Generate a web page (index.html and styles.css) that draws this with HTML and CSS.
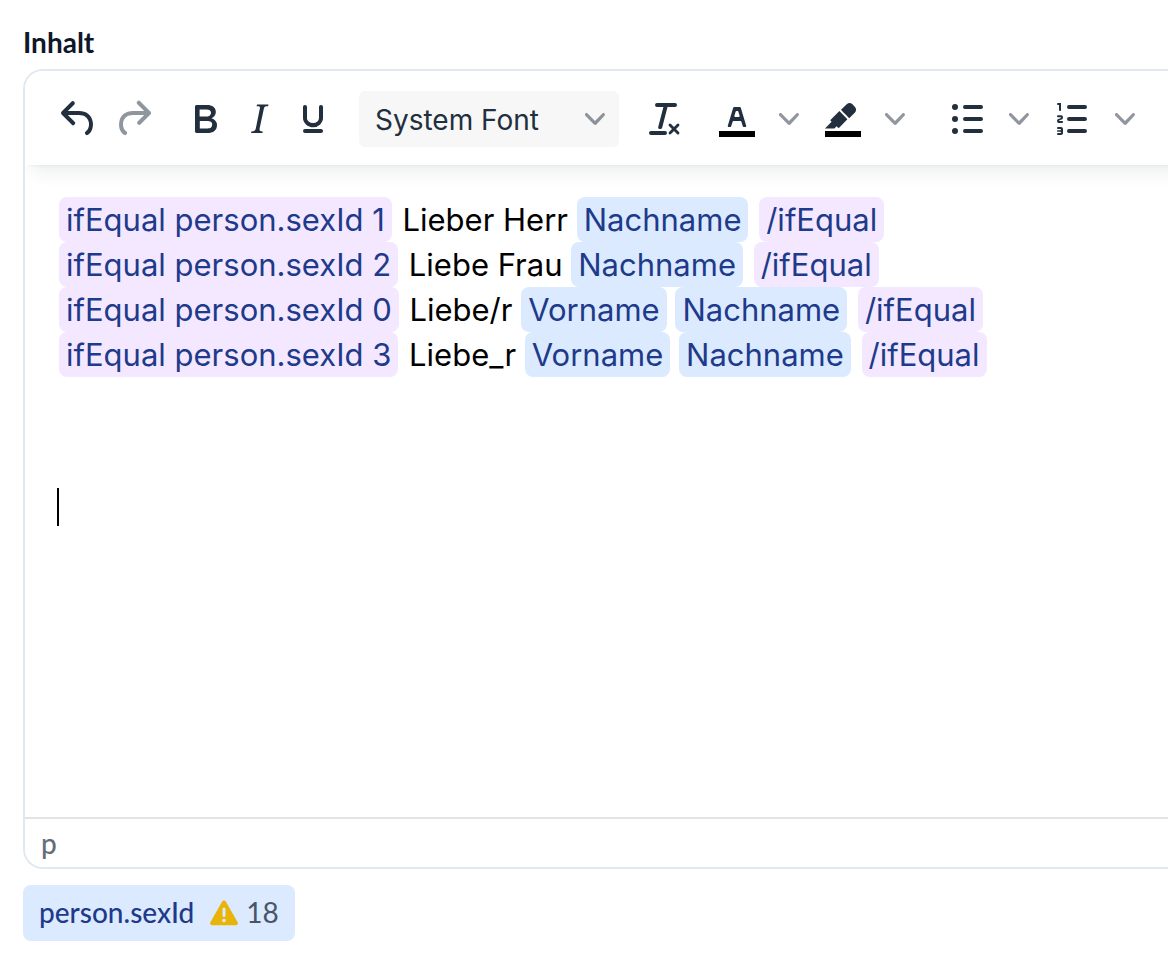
FILE: index.html
```
<!DOCTYPE html>
<html lang="de">
<head>
<meta charset="utf-8">
<title>Inhalt</title>
<link rel="stylesheet" href="styles.css">
</head>
<body>
<main class="field">
  <h1 class="field-label" id="content-label">Inhalt</h1>
  <section class="editor" aria-labelledby="content-label">
    <div class="toolbar" role="toolbar" aria-label="Formatierung">
      <div class="group history-group">
        <button class="tool" aria-label="Rückgängig"><svg class="icon" viewBox="0 0 24 24"><path d="M6.4 8H12c3.7 0 6.2 2 6.8 5.1.6 2.7-.4 5.6-2.3 6.8a1 1 0 0 1-1-1.8c1.1-.6 1.8-2.7 1.4-4.6-.5-2.1-2.1-3.5-4.9-3.5H6.4l3.3 3.3a1 1 0 1 1-1.4 1.4l-5-5a1 1 0 0 1 0-1.4l5-5a1 1 0 0 1 1.4 1.4L6.4 8Z"/></svg></button>
        <button class="tool" aria-label="Wiederholen" disabled><svg class="icon" viewBox="0 0 24 24"><path d="M17.6 10H12c-2.8 0-4.4 1.4-4.9 3.5-.4 2 .3 4 1.4 4.6a1 1 0 1 1-1 1.8c-2-1.2-2.9-4.1-2.3-6.8.6-3 3-5.1 6.8-5.1h5.6l-3.3-3.3a1 1 0 1 1 1.4-1.4l5 5a1 1 0 0 1 0 1.4l-5 5a1 1 0 0 1-1.4-1.4l3.3-3.3Z"/></svg></button>
      </div>
      <div class="group">
        <button class="tool" aria-label="Fett"><svg class="icon" viewBox="0 0 24 24"><path fill-rule="evenodd" d="M7.8 19c-.3 0-.5 0-.6-.2l-.2-.5V5.7c0-.2 0-.4.2-.5l.6-.2h5c1.5 0 2.7.3 3.5 1 .7.6 1.1 1.4 1.1 2.5a3 3 0 0 1-.6 1.9c-.4.6-1 1-1.6 1.2.4.1.9.3 1.3.6s.8.7 1 1.2c.4.4.5 1 .5 1.6 0 1.3-.4 2.3-1.3 3-.8.7-2.1 1-3.8 1H7.8Zm5-8.3c.6 0 1.2-.1 1.6-.5.4-.3.6-.7.6-1.3 0-1.1-.8-1.7-2.3-1.7H9.3v3.5h3.4Zm.5 6c.7 0 1.3-.1 1.7-.4.4-.4.6-.9.6-1.5s-.2-1-.7-1.4c-.4-.3-1-.4-2-.4H9.4v3.8h4Z"/></svg></button>
        <button class="tool" aria-label="Kursiv"><svg class="icon" viewBox="0 0 24 24"><path d="m16.7 4.7-.1.9h-.3c-.6 0-1 0-1.4.3-.3.3-.4.6-.5 1.1l-2.1 9.8v.6c0 .5.4.8 1.4.8h.2l-.2.8H8l.2-.8h.2c1.1 0 1.8-.5 2-1.5l2-9.8.1-.5c0-.6-.4-.8-1.4-.8h-.3l.2-.9h5.8Z"/></svg></button>
        <button class="tool" aria-label="Unterstrichen"><svg class="icon" viewBox="0 0 24 24"><path d="M16 5c.6 0 1 .4 1 1v5.5a4 4 0 0 1-.4 1.8l-1 1.4a5.3 5.3 0 0 1-5.5 1 5 5 0 0 1-1.6-1c-.5-.4-.8-.9-1.1-1.4a4 4 0 0 1-.4-1.8V6c0-.6.4-1 1-1s1 .4 1 1v5.5c0 .3 0 .6.2 1l.6.7a3.3 3.3 0 0 0 2.2.8 3.4 3.4 0 0 0 2.2-.8c.3-.2.4-.5.6-.8l.2-.9V6c0-.6.4-1 1-1ZM8 17h8c.6 0 1 .4 1 1s-.4 1-1 1H8a1 1 0 0 1 0-2Z"/></svg></button>
      </div>
      <div class="select-wrap">
        <select class="font-select" aria-label="Schriftart"><option>System Font</option></select>
        <svg class="chevron" viewBox="0 0 10 10"><path d="M8.7 2.2c.3-.3.8-.3 1 0 .4.4.4.9 0 1.2L5.7 7.8c-.3.3-.9.3-1.2 0L.2 3.4a.8.8 0 0 1 0-1.2c.3-.3.8-.3 1.1 0L5 6l3.7-3.8Z"/></svg>
      </div>
      <div class="group">
        <button class="tool" aria-label="Formatierung entfernen"><svg class="icon" viewBox="0 0 24 24"><path d="M13.2 6a1 1 0 0 1 0 .2l-2.6 10a1 1 0 0 1-1 .8h-.2a.8.8 0 0 1-.8-1l2.6-10H8a1 1 0 1 1 0-2h9a1 1 0 0 1 0 2h-3.8ZM5 18h7a1 1 0 0 1 0 2H5a1 1 0 0 1 0-2Zm13 1.5L16.5 18 15 19.5a.7.7 0 0 1-1-1l1.5-1.5-1.5-1.5a.7.7 0 0 1 1-1l1.5 1.5 1.5-1.5a.7.7 0 0 1 1 1L17.5 17l1.5 1.5a.7.7 0 0 1-1 1Z"/></svg></button>
      </div>
      <div class="group split-group color-group">
        <div class="split">
          <button class="tool" aria-label="Textfarbe"><svg class="icon" viewBox="0 0 24 24"><path class="swatch" d="M3 18h18v3H3z"/><path fill-rule="evenodd" d="M8.7 16h-.8a.5.5 0 0 1-.5-.6l2.7-9c.1-.3.3-.4.5-.4h2.8c.2 0 .4.1.5.4l2.7 9a.5.5 0 0 1-.5.6h-.8a.5.5 0 0 1-.4-.4l-.7-2.2c0-.3-.3-.4-.5-.4h-3.4c-.2 0-.4.1-.5.4l-.7 2.2c0 .3-.2.4-.4.4Zm2.6-7.6-.6 2a.5.5 0 0 0 .5.6h1.6a.5.5 0 0 0 .5-.6l-.6-2c0-.3-.3-.4-.5-.4h-.4c-.2 0-.4.1-.5.4Z"/></svg></button>
          <button class="tool" aria-label="Textfarbe wählen"><svg class="chevron" viewBox="0 0 10 10"><path d="M8.7 2.2c.3-.3.8-.3 1 0 .4.4.4.9 0 1.2L5.7 7.8c-.3.3-.9.3-1.2 0L.2 3.4a.8.8 0 0 1 0-1.2c.3-.3.8-.3 1.1 0L5 6l3.7-3.8Z"/></svg></button>
        </div>
        <div class="split">
          <button class="tool" aria-label="Hervorheben"><svg class="icon" viewBox="0 0 24 24"><path class="swatch" d="M3 18h18v3H3z"/><path d="M7.7 16.7H3l3.3-3.3-.7-.8L10.2 8l4 4.1-4 4.2c-.2.2-.6.2-.8 0l-.6-.7-1.1 1.1zm5-7.5L11 7.4l3-2.9a2 2 0 0 1 2.6 0L18 6c.7.7.7 2 0 2.7l-2.9 2.9-1.8-1.8-.5-.6"/></svg></button>
          <button class="tool" aria-label="Hintergrundfarbe wählen"><svg class="chevron" viewBox="0 0 10 10"><path d="M8.7 2.2c.3-.3.8-.3 1 0 .4.4.4.9 0 1.2L5.7 7.8c-.3.3-.9.3-1.2 0L.2 3.4a.8.8 0 0 1 0-1.2c.3-.3.8-.3 1.1 0L5 6l3.7-3.8Z"/></svg></button>
        </div>
      </div>
      <div class="group split-group list-group">
        <div class="split">
          <button class="tool" aria-label="Aufzählung"><svg class="icon" viewBox="0 0 24 24"><path d="M11 5h8a1 1 0 0 1 0 2h-8a1 1 0 0 1 0-2Zm0 6h8a1 1 0 0 1 0 2h-8a1 1 0 0 1 0-2Zm0 6h8a1 1 0 0 1 0 2h-8a1 1 0 0 1 0-2Z"/><circle cx="6" cy="6" r="1.5"/><circle cx="6" cy="12" r="1.5"/><circle cx="6" cy="18" r="1.5"/></svg></button>
          <button class="tool" aria-label="Aufzählungsart"><svg class="chevron" viewBox="0 0 10 10"><path d="M8.7 2.2c.3-.3.8-.3 1 0 .4.4.4.9 0 1.2L5.7 7.8c-.3.3-.9.3-1.2 0L.2 3.4a.8.8 0 0 1 0-1.2c.3-.3.8-.3 1.1 0L5 6l3.7-3.8Z"/></svg></button>
        </div>
        <div class="split">
          <button class="tool" aria-label="Nummerierte Liste"><svg class="icon" viewBox="0 0 24 24"><path d="M10 17h8a1 1 0 0 1 0 2h-8a1 1 0 0 1 0-2Zm0-6h8a1 1 0 0 1 0 2h-8a1 1 0 0 1 0-2Zm0-6h8a1 1 0 0 1 0 2h-8a1 1 0 0 1 0-2ZM6 4v3.5c0 .3-.2.5-.5.5a.5.5 0 0 1-.5-.5V5h-.5a.5.5 0 0 1 0-1H6Zm-1 8.8.2.2h1.3c.3 0 .5.2.5.5s-.2.5-.5.5H4.9a1 1 0 0 1-.9-1V13c0-.4.3-.8.6-1l1.2-.4.2-.3a.2.2 0 0 0-.2-.2H4.5a.5.5 0 0 1-.5-.5c0-.3.2-.5.5-.5h1.6c.5 0 .9.4.9 1v.1c0 .4-.3.8-.6 1l-1.2.4-.2.3ZM7 17v2c0 .6-.4 1-1 1H4.5a.5.5 0 0 1 0-1h1.2c.2 0 .3-.1.3-.3 0-.2-.1-.3-.3-.3H4.4a.4.4 0 1 1 0-.8h1.3c.2 0 .3-.1.3-.3 0-.2-.1-.3-.3-.3H4.5a.5.5 0 1 1 0-1H6c.6 0 1 .4 1 1Z"/></svg></button>
          <button class="tool" aria-label="Nummerierungsart"><svg class="chevron" viewBox="0 0 10 10"><path d="M8.7 2.2c.3-.3.8-.3 1 0 .4.4.4.9 0 1.2L5.7 7.8c-.3.3-.9.3-1.2 0L.2 3.4a.8.8 0 0 1 0-1.2c.3-.3.8-.3 1.1 0L5 6l3.7-3.8Z"/></svg></button>
        </div>
      </div>
    </div>
    <div class="content" contenteditable="true" spellcheck="false" role="textbox" aria-multiline="true" aria-labelledby="content-label">
      <p class="paragraph"><span class="token token-block">ifEqual person.sexId 1</span> Lieber Herr <span class="token">Nachname</span> <span class="token token-block">/ifEqual</span><br><span class="token token-block">ifEqual person.sexId 2</span> Liebe Frau <span class="token">Nachname</span> <span class="token token-block">/ifEqual</span><br><span class="token token-block">ifEqual person.sexId 0</span> Liebe/r <span class="token">Vorname</span> <span class="token">Nachname</span> <span class="token token-block">/ifEqual</span><br><span class="token token-block">ifEqual person.sexId 3</span> Liebe_r <span class="token">Vorname</span> <span class="token">Nachname</span> <span class="token token-block">/ifEqual</span></p>
      <p class="paragraph"><br></p>
      <p class="paragraph caret-line"><span class="caret"></span></p>
    </div>
    <div class="statusbar">p</div>
  </section>
  <div class="variable">
    <span class="variable-name">person.sexId</span>
    <svg class="warning" viewBox="0 0 28 26" role="img" aria-label="Warnung"><path class="warning-shape" d="M12.2 1.6a2.1 2.1 0 0 1 3.6 0l11.8 20.6a2.1 2.1 0 0 1-1.8 3.1H2.2a2.1 2.1 0 0 1-1.8-3.1Z"/><path class="warning-mark" d="M14 9v6.5"/><circle class="warning-dot" cx="14" cy="20.5" r="1.8"/></svg>
    <span class="variable-count">18</span>
  </div>
</main>
</body>
</html>
```
FILE: styles.css
```
* {
  box-sizing: border-box;
}

body {
  margin: 0;
  background: #fff;
  font-family: Lato, sans-serif;
  font-size: 28px;
  line-height: 40px;
  color: #0f172a;
}

.field {
  display: flex;
  flex-direction: column;
  align-items: flex-start;
  padding: 22px 0 20px 23px;
}

.field-label {
  margin: 0 0 7px;
  font-size: 28px;
  font-weight: 700;
}

.editor {
  align-self: stretch;
  overflow: hidden;
  border: 2px solid #e2e8f0;
  border-right: 0;
  border-radius: 20px 0 0 20px;
}

/* The toolbar bleeds past the right edge so its shadow does not fade there. */
.toolbar {
  position: relative;
  display: flex;
  align-items: center;
  gap: 22px;
  margin-right: -24px;
  padding: 20px 30px 18px;
  background: #fff;
  box-shadow: 0 4px 4px -4px rgba(34, 47, 62, 0.1), 0 16px 16px -8px rgba(34, 47, 62, 0.07);
}

.group {
  display: flex;
  flex: none;
  gap: 6px;
}

.history-group {
  margin-right: 2px;
}

.split-group {
  gap: 20px;
}

.color-group {
  margin-left: 2px;
}

.list-group {
  margin-left: 16px;
}

.split {
  display: flex;
  gap: 18px;
}

.tool {
  display: flex;
  align-items: center;
  padding: 0;
  border: 0;
  background: none;
}

.tool:disabled {
  opacity: 0.5;
}

.icon {
  width: 48px;
  height: 48px;
  fill: #222f3e;
}

.swatch {
  fill: #000;
}

.chevron {
  width: 20px;
  height: 20px;
  fill: #222f3e;
  opacity: 0.5;
}

.select-wrap {
  display: grid;
  flex: none;
  align-items: center;
  width: 260px;
}

.select-wrap > * {
  grid-area: 1 / 1;
}

.select-wrap .chevron {
  justify-self: end;
  margin-right: 14px;
  pointer-events: none;
}

.font-select {
  width: 100%;
  height: 56px;
  padding: 2px 40px 0 16px;
  border: 0;
  border-radius: 6px;
  background: #f7f7f7;
  appearance: none;
  font-family: Inter, sans-serif;
  font-size: 28px;
  color: #222f3e;
}

.content {
  min-height: 652px;
  padding: 32px;
  outline: none;
  font-family: Inter, sans-serif;
  font-size: 31px;
  line-height: 45px;
  color: #000;
}

.paragraph {
  margin: 0 0 31px;
}

.token {
  display: inline-block;
  padding: 0 7px;
  border-radius: 8px;
  background: #dbeafe;
  color: #1e3a8a;
}

.token-block {
  margin: 0 2px;
  background: #f3e8ff;
}

.caret-line {
  display: flex;
  align-items: center;
  height: 45px;
}

.caret {
  width: 2px;
  height: 38px;
  background: #000;
}

.statusbar {
  padding: 4px 16px;
  border-top: 2px solid #e3e3e3;
  background: #fff;
  color: #646d78;
  font-weight: 500;
}

.variable {
  display: flex;
  align-items: center;
  margin-top: 16px;
  padding: 7px 16px 9px;
  border-radius: 8px;
  background: #dbeafe;
  font-weight: 500;
}

.variable-name {
  color: #1e3a8a;
}

.warning {
  width: 28px;
  height: 26px;
  margin: 2px 8px 0 16px;
}

.warning-shape {
  fill: #eab308;
}

.warning-mark {
  stroke: #dbeafe;
  stroke-width: 3;
  stroke-linecap: round;
}

.warning-dot {
  fill: #dbeafe;
}

.variable-count {
  font-weight: 400;
  color: #475569;
}
```
